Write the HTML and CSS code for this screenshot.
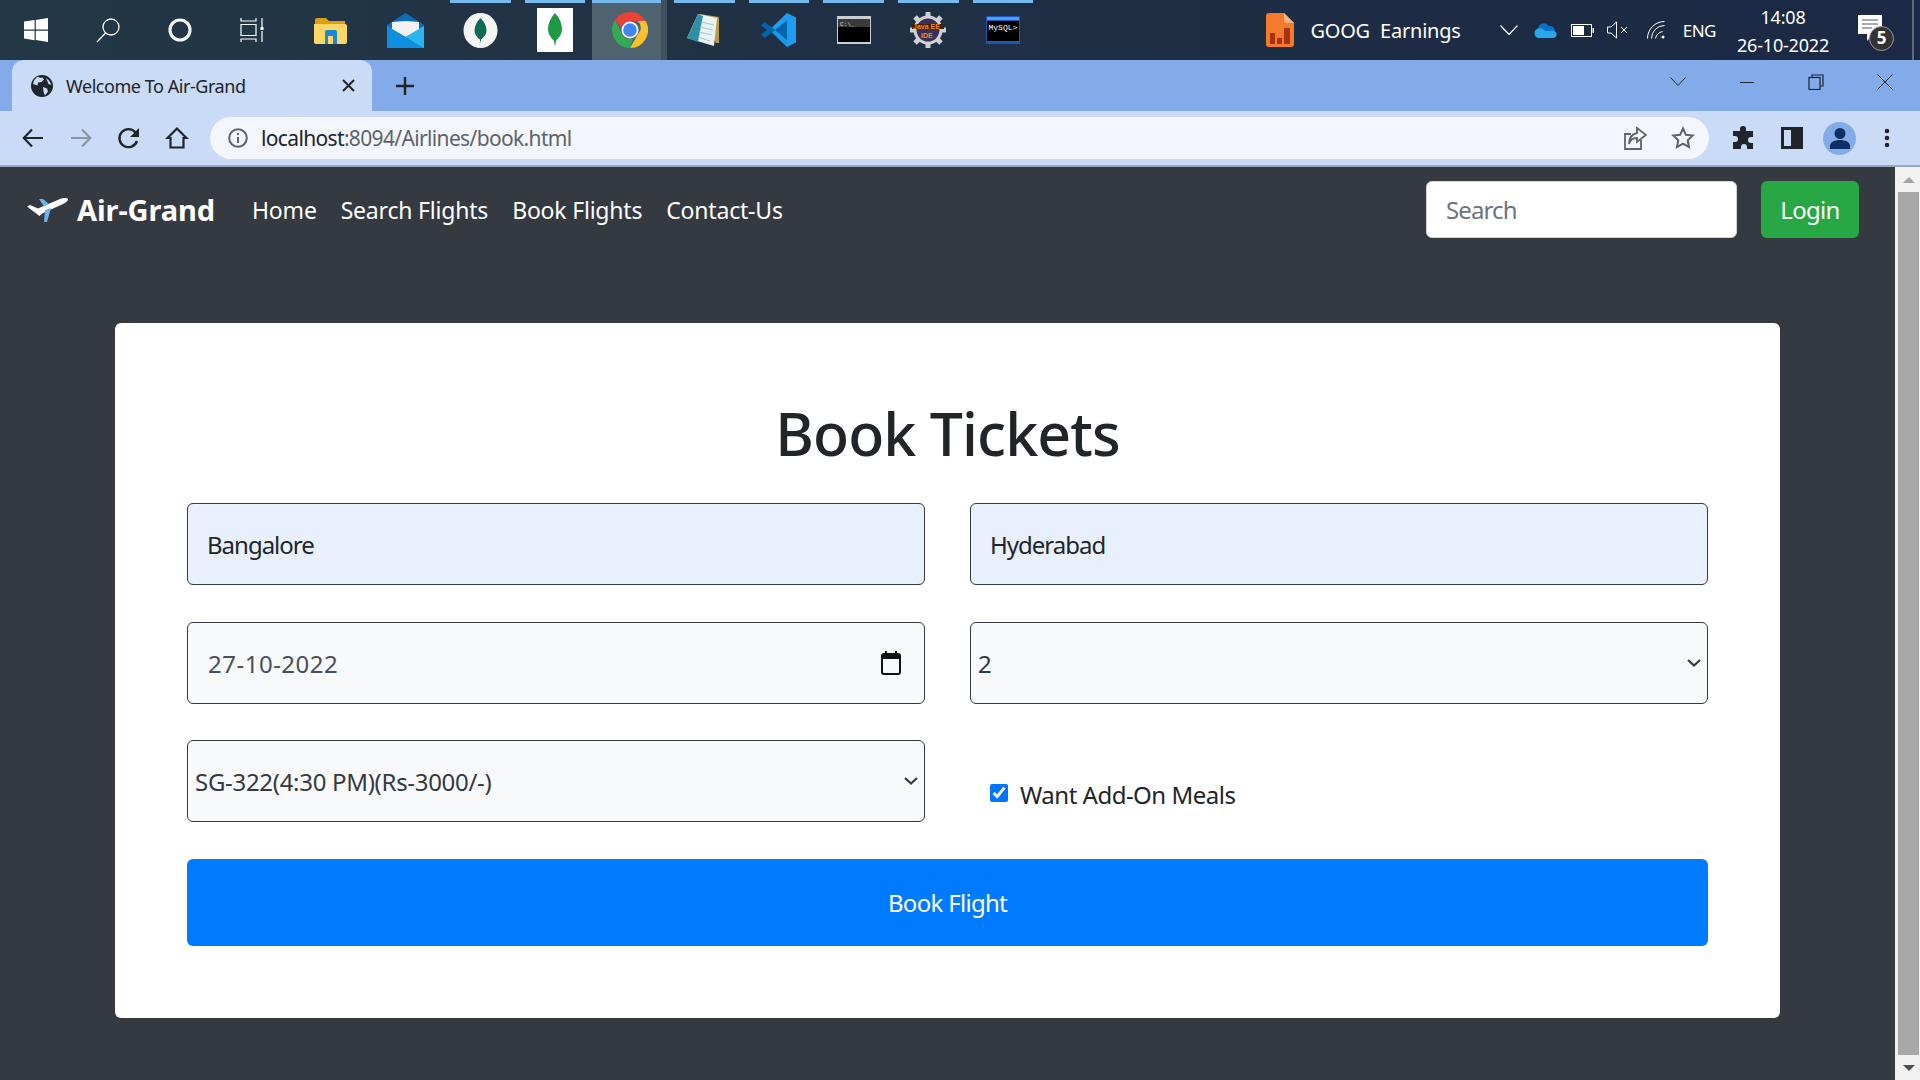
FILE: index.html
```html
<!DOCTYPE html>
<html lang="en">
<head>
    <meta charset="UTF-8">
    <title>Welcome To Air-Grand</title>
    <link rel="stylesheet" href="styles.css">
</head>
<body>

    <!-- windows taskbar -->
    <div class="taskbar">
        <div class="sys-btn"><svg width="24" height="24" viewBox="0 0 24 24"><path fill="#fff" d="M0 3.6 10.6 2v9.5H0zM11.8 1.9 24 0v11.5H11.8zM0 12.7h10.6v9.5L0 20.6zM11.8 12.7H24V24l-12.2-1.9z"/></svg></div>
        <div class="sys-btn"><svg width="26" height="26" viewBox="0 0 26 26" fill="none" stroke="#fff" stroke-width="1.3"><circle cx="16" cy="10" r="8"/><path d="M10.5 16 2 25"/></svg></div>
        <div class="sys-btn"><svg width="24" height="24" viewBox="0 0 24 24" fill="none" stroke="#f4f4f4" stroke-width="3.2"><circle cx="12" cy="12" r="10"/></svg></div>
        <div class="sys-btn"><svg width="26" height="26" viewBox="0 0 26 26" fill="none" stroke="#fff" stroke-width="1.2"><path d="M2 1v3h15V1M2 7.5h15v11H2zM2 25v-3h15v3M23 1v9M23 14v11"/><rect x="21.5" y="10" width="3" height="3" fill="#fff" stroke="none"/></svg></div>

        <div class="task-list">
            <div class="task"><svg width="33" height="27" viewBox="0 0 33 27"><path fill="#dd9f12" d="M1 3a2 2 0 0 1 2-2h9l3 3h16v6H1z"/><path fill="#fdd766" d="M0 7h31a2 2 0 0 1 2 2v16a2 2 0 0 1-2 2H2a2 2 0 0 1-2-2z"/><path fill="#1c86d8" d="M11 27V15a2 2 0 0 1 2-2h8a2 2 0 0 1 2 2v12h-4v-8h-5v8z"/><rect x="15.500" y="21" width="3" height="6" fill="#fdd766"/></svg></div>
            <div class="task"><svg width="37" height="35" viewBox="0 0 37 35"><path fill="#0f6cbd" d="M0 12 18.500 0 37 12v4H0z"/><path fill="#f2f2f2" d="m5 9 13.500-1L32 9v8L18.500 24 5 17z"/><path fill="#29b6f0" d="M0 13 18.500 24 37 13v22H0z"/><path fill="#0f8fdd" d="M0 35V13l37 22z"/></svg></div>
            <div class="task running"><svg width="35" height="35" viewBox="0 0 35 35"><ellipse cx="17.500" cy="17.500" rx="17" ry="17.500" fill="#f5f5f5"/><path fill="#0f6b4f" d="M17.500 5c4 4 6 8.500 6 12.500s-3 7-5.400 9l-.6 3.500-.6-3.500c-2.400-2-5.400-5-5.400-9S13.500 9 17.500 5z"/></svg></div>
            <div class="task running"><svg width="36" height="44" viewBox="0 0 36 44"><rect width="36" height="44" fill="#fff"/><path fill="#1f9a44" d="M18 5c4.500 5 7 10.500 7 16s-3.500 9-6 12l-1 6-1-6c-2.500-3-6-6.500-6-12S13.500 10 18 5z"/></svg></div>
            <div class="task running active"><svg width="36" height="36" viewBox="0 0 36 36"><path fill="#ea4335" d="M18 0a18 18 0 0 1 15.600 9H18a9 9 0 0 0-8.700 6.700L3.100 8A18 18 0 0 1 18 0z"/><path fill="#fbc02d" d="M33.600 9A18 18 0 0 1 18 36l7.800-13.500A9 9 0 0 0 25.800 9z"/><path fill="#34a853" d="M18 36A18 18 0 0 1 3.100 8l7.700 14.500A9 9 0 0 0 21 26.500z"/><circle cx="18" cy="18" r="8.500" fill="#fff"/><circle cx="18" cy="18" r="6.800" fill="#4285f4"/></svg></div>
            <div class="task running"><svg width="36" height="34" viewBox="0 0 36 34"><path fill="#bd9a4a" d="M14 1 33 4v26h-3z"/><path fill="#e8f4f4" d="M12 1 31 5 28 33 1 25z"/><path fill="#2f8fa5" d="M12 1 17 3 12 29 1 25z"/><path stroke="#a9c6cc" fill="none" d="M15 9l13 3M14 14l13 3M13 19l13 3M12 24l12 4"/></svg></div>
            <div class="task running"><svg width="37" height="36" viewBox="0 0 37 36"><path fill="#0065a9" d="M1 13.500 4.500 10l7.500 5.500L27 1l3 1.500v31L27 35 12 20.500 4.500 26 1 22.500 7 18z"/><path fill="#1f9cf0" d="M27 1l9 4.500v25L27 35l-.1-26.500L15 18l-3-2.500z"/><path fill="#1f9cf0" d="M27 28 27 35 12 20.500 15 18z" opacity=".9"/></svg></div>
            <div class="task running"><svg width="34" height="28" viewBox="0 0 34 28"><rect width="34" height="28" fill="#c9cfd3"/><rect x="1" y="3" width="32" height="23" fill="#000"/><rect x="1" y="3" width="32" height="8" fill="#3a3a3a"/><text x="3" y="10" class="cmd-text">C:\_</text></svg></div>
            <div class="task running"><svg width="36" height="36" viewBox="0 0 36 36"><g stroke="#cfd2d4" stroke-width="5"><path d="M18 0v36M0 18h36M5 5l26 26M31 5 5 31"/></g><circle cx="18" cy="18" r="14.500" fill="#cfd2d4"/><circle cx="18" cy="18" r="11.500" fill="#3b2f55"/><rect x="2" y="12" width="32" height="5" fill="#3a2408"/><text x="3" y="16.500" class="java-text">Java EE</text><text x="11" y="26" class="java-text">IDE</text></svg></div>
            <div class="task running"><svg width="34" height="28" viewBox="0 0 34 28"><rect width="34" height="28" rx="1" fill="#1c57b8"/><rect x="1" y="1" width="32" height="3" fill="#4aa3f0"/><rect x="1" y="5" width="32" height="20" fill="#000"/><text x="2.500" y="14" class="mysql-text">MySQL&gt;</text></svg></div>
        </div>

        <div class="tray">
            <div class="news">
                <svg width="28" height="34" viewBox="0 0 28 34"><path fill="#f47a2c" d="M3 0h15l10 10v21a3 3 0 0 1-3 3H3a3 3 0 0 1-3-3V3a3 3 0 0 1 3-3z"/><path fill="#fbb27d" d="M18 0l10 10h-8a2 2 0 0 1-2-2z"/><path fill="#a8320e" d="M4 20h5v11H4zM11 25h5v6h-5zM18 15h6v16h-6z"/></svg>
                <span class="news-text">GOOG&nbsp; Earnings</span>
            </div>
            <div class="tray-icons">
                <svg width="18" height="10" viewBox="0 0 18 10" fill="none" stroke="#fff" stroke-width="1.2"><path d="M.5.5 9 9.500 17.500.5"/></svg>
                <svg class="tray-cloud" width="24" height="16" viewBox="0 0 24 16"><path fill="#0f6fc6" d="M5 7a6 6 0 0 1 11-3 5 5 0 0 1 6 5H7z"/><path fill="#28a8ea" d="M5 16a5 5 0 0 1 0-9.500C10 5 11 9 14 9c3.500 0 7 -1 9 1.500A3.500 3.500 0 0 1 20 16z"/></svg>
                <svg class="tray-battery" width="23" height="13" viewBox="0 0 23 13"><rect x=".5" y=".5" width="20" height="12" fill="none" stroke="#fff"/><rect x="2" y="2" width="11" height="9" fill="#fff"/><rect x="21.500" y="4" width="1.500" height="5" fill="#fff"/></svg>
                <svg class="tray-volume" width="21" height="18" viewBox="0 0 21 18" fill="none" stroke="#fff"><path d="M.5 6h3.500L9.500 1v16L4 12H.5z"/><path d="m14 6 6 6M20 6l-6 6"/></svg>
                <svg class="tray-wifi" width="19" height="18" viewBox="0 0 19 18" fill="none" stroke="#fff"><path d="M.5 17.500A17 17 0 0 1 17.500.5M4.500 17.500a13 13 0 0 1 13-13M8.500 17.500a9 9 0 0 1 7-7"/><circle cx="16" cy="16" r="1.500" fill="#fff" stroke="none"/></svg>
                <span class="lang">ENG</span>
            </div>
            <div class="clock">
                <span>14:08</span>
                <span>26-10-2022</span>
            </div>
            <div class="notify">
                <svg width="24" height="26" viewBox="0 0 24 26"><path fill="#fff" d="M0 0h24v19H15l-6 7v-7H0z"/><path stroke="#555" d="M4 5h16M4 9h16M4 13h10"/></svg>
                <span class="badge">5</span>
            </div>
        </div>
    </div>

    <!-- browser tabs -->
    <div class="tabstrip">
        <div class="tab">
            <svg width="22" height="22" viewBox="0 0 22 22"><circle cx="11" cy="11" r="11" fill="#20242b"/><path fill="#c9dbf6" d="M7 1.500c1 1.500 3 1.500 4.500 1l1.500 2-2.500 2.500-3.500.5-.5 3L2 9c.5-3.500 2.500-6 5-7.500zM12 12l4 1.500 1 3-3 4-1.500-3.500zM15 3l3 2.500 2.500 4.500-3-1z"/></svg>
            <span class="tab-title">Welcome To Air-Grand</span>
            <svg width="13" height="13" viewBox="0 0 13 13" stroke="#20242b" stroke-width="2"><path d="m1 1 11 11M12 1 1 12"/></svg>
        </div>
        <svg class="new-tab" width="18" height="18" viewBox="0 0 18 18" stroke="#20242b" stroke-width="2.400"><path d="M9 0v18M0 9h18"/></svg>
        <div class="win-controls">
            <svg width="16" height="9" viewBox="0 0 16 9" fill="none" stroke="#1c2430"><path d="M.5.5 8 8.500 15.500.5"/></svg>
            <svg width="16" height="16" viewBox="0 0 16 16" stroke="#1c2430"><path d="M1 8.500h14"/></svg>
            <svg width="16" height="16" viewBox="0 0 16 16" fill="none" stroke="#1c2430" stroke-width="1.200"><path d="M4 3V1h11v11h-3"/><rect x="1" y="3.500" width="11" height="12"/></svg>
            <svg width="16" height="16" viewBox="0 0 16 16" stroke="#1c2430"><path d="m.5.5 15 15M15.500.5l-15 15"/></svg>
        </div>
    </div>

    <!-- address bar -->
    <div class="toolbar">
        <svg class="nav-icon" width="24" height="24" viewBox="0 0 24 24" fill="none" stroke="#20242b" stroke-width="2.200"><path d="M22 12H3M11 3.500 2.800 12l8.200 8.500"/></svg>
        <svg class="nav-icon" width="24" height="24" viewBox="0 0 24 24" fill="none" stroke="#8b95a5" stroke-width="2.200"><path d="M2 12h19M13 3.500l8.200 8.500-8.200 8.500"/></svg>
        <svg class="nav-icon" width="24" height="24" viewBox="0 0 24 24" fill="none" stroke="#20242b" stroke-width="2.400"><path d="M20 15a9 9 0 1 1-1.500-8.500"/><path fill="#20242b" stroke="none" d="M22 2v9h-9z"/></svg>
        <svg class="nav-icon" width="24" height="24" viewBox="0 0 24 24" fill="none" stroke="#20242b" stroke-width="2.200"><path d="M12 2.500 2.500 12H5.500v9.500h13V12h3z"/></svg>
        <div class="omnibox">
            <svg width="20" height="20" viewBox="0 0 20 20" fill="none" stroke="#5f6368" stroke-width="2"><circle cx="10" cy="10" r="8.800"/><path d="M10 9v6M10 5v2"/></svg>
            <span class="url"><b>localhost</b>:8094/Airlines/book.html</span>
            <svg class="omni-share" width="24" height="24" viewBox="0 0 24 24" fill="none" stroke="#5f6368" stroke-width="1.800"><path d="M18 14v9H2V8h6"/><path d="M14 2l9 7-9 7v-4c-4 0-7 2-8 6 0-6 3-10 8-11z"/></svg>
            <svg width="24" height="24" viewBox="0 0 24 24" fill="none" stroke="#5f6368" stroke-width="2"><path d="m12 2.500 2.900 6.300 6.800.8-5 4.700 1.300 6.800-6-3.400-6 3.400 1.300-6.800-5-4.700 6.800-.8z"/></svg>
        </div>
        <div class="toolbar-right">
            <svg width="24" height="24" viewBox="0 0 24 24"><path fill="#20242b" d="M9 3a3 3 0 0 1 6 0v2h7v6h-2a3 3 0 0 0 0 6h2v6h-6v-2a3 3 0 0 0-6 0v2H2v-7h2a3 3 0 0 0 0-6H2V5h7z"/></svg>
            <svg class="side-panel" width="22" height="22" viewBox="0 0 22 22"><path fill="#20242b" fill-rule="evenodd" d="M0 0h22v22H0zM3 3v16h7V3z"/></svg>
            <div class="avatar"><svg width="22" height="22" viewBox="0 0 22 22"><circle cx="11" cy="6.500" r="5.500" fill="#0d2f63"/><path fill="#0d2f63" d="M1 22v-3c0-4 5-6 10-6s10 2 10 6v3z"/></svg></div>
            <svg class="menu-dots" width="6" height="20" viewBox="0 0 6 20" fill="#20242b"><circle cx="3" cy="3" r="2.300"/><circle cx="3" cy="10" r="2.300"/><circle cx="3" cy="17" r="2.300"/></svg>
        </div>
    </div>

    <div class="viewport">
        <div class="page">
            <nav class="navbar">
                <a class="brand">
                    <svg width="41" height="24" viewBox="0 0 41 24"><path fill="#fff" d="M0 8.500 3 7l8 3.500L33 1c3-1 7-1.500 8 0 .5 2-3 4-6 5.500L16 15 12.500 18z"/><path fill="#6fb3ee" d="M12 1h4l6 5-5 2.500zM24 10l-4 14h-3l1-12z"/></svg>
                    <span>Air-Grand</span>
                </a>
                <a class="nav-link">Home</a>
                <a class="nav-link">Search Flights</a>
                <a class="nav-link">Book Flights</a>
                <a class="nav-link">Contact-Us</a>
                <input class="search" type="text" placeholder="Search">
                <button class="login">Login</button>
            </nav>

            <div class="card">
                <h1 class="title">Book Tickets</h1>
                <form class="book-form">
                    <input class="field autofill" type="text" value="Bangalore">
                    <input class="field autofill" type="text" value="Hyderabad">
                    <div class="field-wrap">
                        <input class="field date" type="text" value="27-10-2022">
                        <svg class="cal" width="20" height="24" viewBox="0 0 20 24"><path fill="#111" fill-rule="evenodd" d="M4 0h2v2h8V0h2v2h1a3 3 0 0 1 3 3v16a3 3 0 0 1-3 3H3a3 3 0 0 1-3-3V5a3 3 0 0 1 3-3h1zM2 8v13a1 1 0 0 0 1 1h14a1 1 0 0 0 1-1V8z"/></svg>
                    </div>
                    <div class="field-wrap">
                        <select class="field pick">
                            <option>2</option>
                        </select>
                        <svg class="chevron" width="14" height="8" viewBox="0 0 14 8" fill="none" stroke="#343a40" stroke-width="2.200"><path d="m1 1 6 5.500L13 1"/></svg>
                    </div>
                    <div class="field-wrap">
                        <select class="field pick">
                            <option>SG-322(4:30 PM)(Rs-3000/-)</option>
                        </select>
                        <svg class="chevron" width="14" height="8" viewBox="0 0 14 8" fill="none" stroke="#343a40" stroke-width="2.200"><path d="m1 1 6 5.500L13 1"/></svg>
                    </div>
                    <label class="meal"><input class="check" type="checkbox" checked> Want Add-On Meals</label>
                    <button class="book-btn" type="button">Book Flight</button>
                </form>
            </div>
        </div>

        <div class="scrollbar">
            <div class="arrow up"></div>
            <div class="thumb"></div>
            <div class="arrow down"></div>
        </div>
    </div>

</body>
</html>
```

FILE: styles.css
```css
* {
    box-sizing: border-box;
}

body {
    margin: 0;
    height: 1080px;
    overflow: hidden;
    display: flex;
    flex-direction: column;
    font-family: "Noto Sans", sans-serif;
    background: #343a40;
}

svg {
    display: block;
    flex: none;
}

/* taskbar */
.taskbar {
    height: 60px;
    display: flex;
    background: linear-gradient(to right, #233846, #1f2f44 50%, #1b2944);
    color: #fff;
}

.sys-btn {
    width: 72px;
    display: flex;
    align-items: center;
    justify-content: center;
}

.task-list {
    display: flex;
    margin-left: 5.5px;
}

.task {
    width: 74.7px;
    display: flex;
    align-items: center;
    justify-content: center;
    position: relative;
}

.task.running::before {
    content: "";
    position: absolute;
    top: 0;
    left: 7px;
    right: 7px;
    height: 3px;
    background: #76b9ed;
}

.task.active {
    background: #4f6270;
    border-right: 6px solid #3f505e;
    padding-left: 6px;
}

.task.active::before {
    left: 0;
    right: 0;
}

.cmd-text {
    font: 6px "Liberation Mono", monospace;
    fill: #ddd;
}

.java-text {
    font: bold 7px "Liberation Sans", sans-serif;
    fill: #f08a16;
}

.mysql-text {
    font: 8px "Liberation Mono", monospace;
    fill: #fff;
}

.tray {
    margin-left: auto;
    display: flex;
    align-items: center;
    border-right: 2px solid #5c6a7c;
    margin-right: 6px;
}

.news {
    display: flex;
    align-items: center;
    gap: 16px;
    margin-right: 39px;
}

.news-text {
    font-size: 20px;
    letter-spacing: -0.2px;
    white-space: nowrap;
}

.tray-icons {
    display: flex;
    align-items: center;
    gap: 16px;
}

.tray-cloud {
    margin-left: -1px;
}

.tray-battery {
    margin-left: -2px;
}

.tray-volume {
    margin-left: -3px;
}

.tray-wifi {
    margin-left: 3px;
}

.lang {
    font-size: 17px;
    letter-spacing: -0.5px;
    margin-left: 1px;
}

.clock {
    display: flex;
    flex-direction: column;
    align-items: center;
    gap: 6px;
    font-size: 18px;
    line-height: 22px;
    letter-spacing: -0.2px;
    margin-left: 20px;
    width: 94px;
    padding-top: 1px;
}

.notify {
    position: relative;
    margin-left: 28px;
    margin-right: 30px;
    width: 24px;
    margin-top: -4px;
}

.badge {
    position: absolute;
    left: 11px;
    top: 11px;
    width: 25px;
    height: 25px;
    border-radius: 50%;
    background: #333;
    border: 1px solid #999;
    font-size: 17px;
    font-weight: bold;
    line-height: 22px;
    text-align: center;
}

/* chrome */
.tabstrip {
    height: 51px;
    display: flex;
    align-items: center;
    background: #83abe9;
    padding-left: 12px;
}

.tab {
    width: 360px;
    height: 51px;
    background: #c9dbf6;
    border-radius: 12px 12px 0 0;
    display: flex;
    align-items: center;
    padding: 0 17px 0 19px;
    color: #20242b;
}

.tab-title {
    flex: 1;
    margin-left: 13px;
    font-size: 18px;
    letter-spacing: -0.45px;
}

.new-tab {
    margin-left: 24px;
}

.win-controls {
    margin-left: auto;
    display: flex;
    align-items: center;
    gap: 53px;
    padding: 0 27px 8px 0;
}

.toolbar {
    height: 56px;
    display: flex;
    align-items: center;
    background: #c9dbf6;
    border-bottom: 2px solid #98a6c2;
    padding: 0 0 0 21px;
}

.nav-icon {
    margin-right: 24px;
}

.nav-icon:nth-child(4) {
    margin-right: 21px;
}

.omnibox {
    width: 1499px;
    height: 42px;
    border-radius: 21px;
    background: #f3f7fd;
    display: flex;
    align-items: center;
    padding: 0 14px 0 18px;
    gap: 24px;
}

.url {
    flex: 1;
    margin-left: -11px;
    font-size: 21px;
    letter-spacing: -0.65px;
    color: #5f6368;
}

.url b {
    font-weight: normal;
    color: #20242b;
}

.toolbar-right {
    display: flex;
    align-items: center;
    gap: 24px;
    margin-left: 22px;
}

.side-panel {
    margin-left: 2px;
}

.avatar {
    width: 33px;
    height: 33px;
    border-radius: 50%;
    background: #83abe9;
    display: flex;
    align-items: center;
    justify-content: center;
    margin: 0 0 0 -4px;
}

.menu-dots {
    margin-left: 4px;
}

/* page */
.viewport {
    flex: 1;
    display: flex;
}

.page {
    flex: 1;
    background: #343a40;
    padding: 0 115px;
}

.navbar {
    height: 85px;
    margin: 0 -79px 0 -88px;
    display: flex;
    align-items: center;
}

.brand {
    display: flex;
    align-items: center;
    gap: 9px;
    color: #fff;
    font-size: 29px;
    font-weight: bold;
    letter-spacing: -0.1px;
    margin-right: 37px;
}

.nav-link {
    color: #fff;
    font-size: 23px;
    letter-spacing: -0.2px;
    margin-right: 24px;
    white-space: nowrap;
}

.search {
    margin-left: auto;
    width: 311px;
    height: 57px;
    border: 1px solid #ced4da;
    border-radius: 6px;
    padding: 0 19px;
    font: 24px "Noto Sans", sans-serif;
    letter-spacing: -0.9px;
}

.search::placeholder {
    color: #6c757d;
}

.login {
    width: 98px;
    height: 57px;
    margin-left: 24px;
    background: #28a745;
    color: #fff;
    border: 0;
    border-radius: 6px;
    font: 24px "Noto Sans", sans-serif;
    letter-spacing: -0.7px;
}

.card {
    margin-top: 71px;
    height: 695px;
    background: #fff;
    border-radius: 6px;
    padding: 0 72px;
}

.title {
    margin: 0;
    height: 180px;
    padding-top: 70px;
    text-align: center;
    font-size: 59px;
    line-height: 80px;
    font-weight: 500;
    letter-spacing: -0.9px;
    color: #212529;
}

.book-form {
    display: grid;
    grid-template-columns: 1fr 1fr;
    grid-auto-rows: 82px;
    column-gap: 45px;
    row-gap: 36.5px;
}

.field {
    width: 100%;
    height: 100%;
    border: 1px solid #343a40;
    border-radius: 6px;
    background-color: #f8f9fa;
    font: 24px "Noto Sans", sans-serif;
    letter-spacing: -1px;
    color: #495057;
    padding: 1px 19px 0;
}

.autofill {
    background: #e8f0fe;
    color: #212529;
}

.date {
    letter-spacing: 0.5px;
    padding: 2px 20px 0;
}

.field-wrap {
    position: relative;
}

.cal {
    position: absolute;
    right: 24px;
    top: 29px;
}

.chevron {
    position: absolute;
    right: 7px;
    top: 37px;
    pointer-events: none;
}

.pick {
    appearance: none;
    padding: 1px 0 0 7px;
    color: #343a40;
    letter-spacing: -0.3px;
}

.meal {
    display: flex;
    align-items: center;
    padding: 26px 0 0 20px;
    gap: 12px;
    font-size: 24px;
    letter-spacing: -0.5px;
    color: #212529;
}

.check {
    width: 18px;
    height: 18px;
    margin: 0 0 2px;
    accent-color: #0075ff;
}

.book-btn {
    grid-column: 1 / 3;
    height: 87px;
    background: #007bff;
    color: #fff;
    border: 0;
    border-radius: 6px;
    font: 24px "Noto Sans", sans-serif;
    letter-spacing: -0.7px;
}

/* scrollbar */
.scrollbar {
    width: 25px;
    background: #f1f1f1;
    display: flex;
    flex-direction: column;
    align-items: center;
    padding-left: 2px;
}

.arrow {
    flex: none;
    height: 25px;
    display: flex;
    align-items: center;
    justify-content: center;
}

.arrow::before {
    content: "";
    border-left: 6px solid transparent;
    border-right: 6px solid transparent;
}

.arrow.up::before {
    border-bottom: 6px solid #a3a3a3;
}

.arrow.down::before {
    border-top: 6px solid #505050;
}

.thumb {
    flex: 1;
    width: 21px;
    background: #a8a8a8;
}
```
